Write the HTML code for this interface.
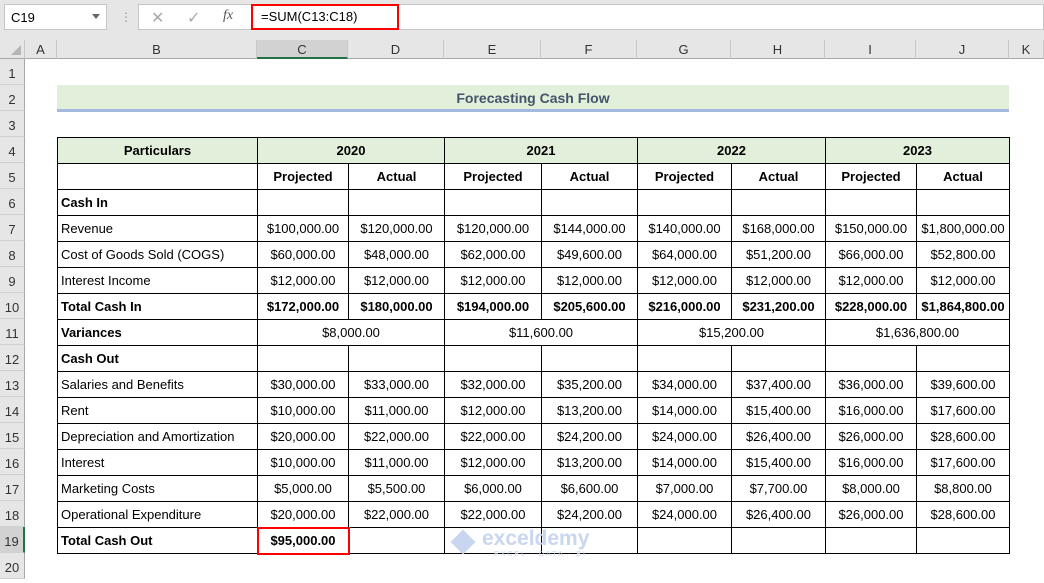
<!DOCTYPE html>
<html><head><style>
*{margin:0;padding:0;box-sizing:border-box}
body{width:1044px;height:578px;overflow:hidden;background:#fff;font-family:"Liberation Sans",sans-serif;position:relative}
.top{position:absolute;left:0;top:0;width:1044px;height:40px;background:#e6e6e6}
.nb{position:absolute;left:4px;top:4px;width:103px;height:26px;background:#fff;border:1px solid #c6c6c6;font-size:13px;padding:5px 6px}
.fb{position:absolute;left:138px;top:4px;width:906px;height:26px;background:#fff;border:1px solid #c6c6c6}
.red{position:absolute;border:2px solid #f00}
.ch{position:absolute;top:40px;height:19px;background:#e6e6e6;border-right:1px solid #c8c8c8;border-bottom:1px solid #a8a8a8;font-size:13px;color:#333;text-align:center;line-height:19px}
.rh{position:absolute;left:0;width:25px;height:26px;background:#e6e6e6;border-bottom:1px solid #d0d0d0;border-right:1px solid #a8a8a8;font-size:13px;color:#333;text-align:center;line-height:30px}
table{position:absolute;left:57px;top:137px;border-collapse:collapse;table-layout:fixed;font-size:13px}
td{border:1px solid #000;height:26px;padding:0 3px;text-align:center;white-space:nowrap;overflow:hidden}
td.l{text-align:left}
tr.b td{font-weight:bold}
.g td{background:#e2efda}
</style></head><body>
<div class="top"></div>
<div class="nb">C19<span style="position:absolute;right:6px;top:9px;border-left:4px solid transparent;border-right:4px solid transparent;border-top:5px solid #666"></span></div>
<div style="position:absolute;left:120px;top:10px;color:#999;font-size:12px">⋮</div>
<div class="fb">
<span style="position:absolute;left:12px;top:3px;color:#aaa;font-size:16px">✕</span>
<span style="position:absolute;left:48px;top:3px;color:#aaa;font-size:16px">✓</span>
<span style="position:absolute;left:84px;top:3px;color:#555;font-size:14px;font-style:italic;font-family:'Liberation Serif',serif">fx</span>
<span style="position:absolute;left:122px;top:4px;font-size:13px">=SUM(C13:C18)</span>
</div>
<div class="red" style="left:251px;top:4px;width:148px;height:26px"></div>
<div class="ch" style="left:0;width:25px"><span style="position:absolute;right:3px;bottom:3px;border-left:10px solid transparent;border-bottom:10px solid #b5b5b5"></span></div>
<div class="ch" style="left:25px;width:32px">A</div>
<div class="ch" style="left:57px;width:200px">B</div>
<div class="ch" style="left:257px;width:91px;background:#d2d2d2;border-bottom:2px solid #217346">C</div>
<div class="ch" style="left:348px;width:96px">D</div>
<div class="ch" style="left:444px;width:97px">E</div>
<div class="ch" style="left:541px;width:96px">F</div>
<div class="ch" style="left:637px;width:94px">G</div>
<div class="ch" style="left:731px;width:94px">H</div>
<div class="ch" style="left:825px;width:91px">I</div>
<div class="ch" style="left:916px;width:93px">J</div>
<div class="ch" style="left:1009px;width:35px">K</div>
<div class="rh" style="top:59px">1</div><div class="rh" style="top:85px">2</div><div class="rh" style="top:111px">3</div><div class="rh" style="top:137px">4</div><div class="rh" style="top:163px">5</div><div class="rh" style="top:189px">6</div><div class="rh" style="top:215px">7</div><div class="rh" style="top:241px">8</div><div class="rh" style="top:267px">9</div><div class="rh" style="top:293px">10</div><div class="rh" style="top:319px">11</div><div class="rh" style="top:345px">12</div><div class="rh" style="top:371px">13</div><div class="rh" style="top:397px">14</div><div class="rh" style="top:423px">15</div><div class="rh" style="top:449px">16</div><div class="rh" style="top:475px">17</div><div class="rh" style="top:501px">18</div><div class="rh" style="top:527px;background:#d2d2d2;border-right:2px solid #217346">19</div><div class="rh" style="top:553px">20</div>
<div style="position:absolute;left:57px;top:85px;width:952px;height:24px;background:#e2efda;text-align:center;line-height:26px;font-weight:bold;font-size:14px;color:#44546a">Forecasting Cash Flow</div>
<div style="position:absolute;left:57px;top:109px;width:952px;height:3px;background:#a4b8e0"></div>
<table>
<colgroup><col style="width:200px"><col style="width:91px"><col style="width:96px"><col style="width:97px"><col style="width:96px"><col style="width:94px"><col style="width:94px"><col style="width:91px"><col style="width:93px"></colgroup>
<tr class="b g"><td>Particulars</td><td colspan="2">2020</td><td colspan="2">2021</td><td colspan="2">2022</td><td colspan="2">2023</td></tr>
<tr class="b"><td></td><td>Projected</td><td>Actual</td><td>Projected</td><td>Actual</td><td>Projected</td><td>Actual</td><td>Projected</td><td>Actual</td></tr>
<tr class="b"><td class="l">Cash In</td><td></td><td></td><td></td><td></td><td></td><td></td><td></td><td></td></tr>
<tr><td class="l">Revenue</td><td>$100,000.00</td><td>$120,000.00</td><td>$120,000.00</td><td>$144,000.00</td><td>$140,000.00</td><td>$168,000.00</td><td>$150,000.00</td><td>$1,800,000.00</td></tr>
<tr><td class="l">Cost of Goods Sold (COGS)</td><td>$60,000.00</td><td>$48,000.00</td><td>$62,000.00</td><td>$49,600.00</td><td>$64,000.00</td><td>$51,200.00</td><td>$66,000.00</td><td>$52,800.00</td></tr>
<tr><td class="l">Interest Income</td><td>$12,000.00</td><td>$12,000.00</td><td>$12,000.00</td><td>$12,000.00</td><td>$12,000.00</td><td>$12,000.00</td><td>$12,000.00</td><td>$12,000.00</td></tr>
<tr class="b"><td class="l">Total Cash In</td><td>$172,000.00</td><td>$180,000.00</td><td>$194,000.00</td><td>$205,600.00</td><td>$216,000.00</td><td>$231,200.00</td><td>$228,000.00</td><td>$1,864,800.00</td></tr>
<tr><td class="l"><b>Variances</b></td><td colspan="2">$8,000.00</td><td colspan="2">$11,600.00</td><td colspan="2">$15,200.00</td><td colspan="2">$1,636,800.00</td></tr>
<tr class="b"><td class="l">Cash Out</td><td></td><td></td><td></td><td></td><td></td><td></td><td></td><td></td></tr>
<tr><td class="l">Salaries and Benefits</td><td>$30,000.00</td><td>$33,000.00</td><td>$32,000.00</td><td>$35,200.00</td><td>$34,000.00</td><td>$37,400.00</td><td>$36,000.00</td><td>$39,600.00</td></tr>
<tr><td class="l">Rent</td><td>$10,000.00</td><td>$11,000.00</td><td>$12,000.00</td><td>$13,200.00</td><td>$14,000.00</td><td>$15,400.00</td><td>$16,000.00</td><td>$17,600.00</td></tr>
<tr><td class="l">Depreciation and Amortization</td><td>$20,000.00</td><td>$22,000.00</td><td>$22,000.00</td><td>$24,200.00</td><td>$24,000.00</td><td>$26,400.00</td><td>$26,000.00</td><td>$28,600.00</td></tr>
<tr><td class="l">Interest</td><td>$10,000.00</td><td>$11,000.00</td><td>$12,000.00</td><td>$13,200.00</td><td>$14,000.00</td><td>$15,400.00</td><td>$16,000.00</td><td>$17,600.00</td></tr>
<tr><td class="l">Marketing Costs</td><td>$5,000.00</td><td>$5,500.00</td><td>$6,000.00</td><td>$6,600.00</td><td>$7,000.00</td><td>$7,700.00</td><td>$8,000.00</td><td>$8,800.00</td></tr>
<tr><td class="l">Operational Expenditure</td><td>$20,000.00</td><td>$22,000.00</td><td>$22,000.00</td><td>$24,200.00</td><td>$24,000.00</td><td>$26,400.00</td><td>$26,000.00</td><td>$28,600.00</td></tr>
<tr class="b"><td class="l">Total Cash Out</td><td>$95,000.00</td><td></td><td></td><td></td><td></td><td></td><td></td><td></td></tr>
</table>
<div class="red" style="left:257px;top:527px;width:93px;height:28px"></div>
<div style="position:absolute;left:452px;top:531px;width:22px;height:22px;background:#c9d6f0;transform:rotate(45deg) scale(.8)"></div>
<div style="position:absolute;left:482px;top:527px;font-size:21px;font-weight:bold;color:#c9d6f0">exceldemy</div>
<div style="position:absolute;left:494px;top:551px;font-size:7px;color:#c9d6f0;letter-spacing:2px">EXCEL · DATA · BI</div>
</body></html>
